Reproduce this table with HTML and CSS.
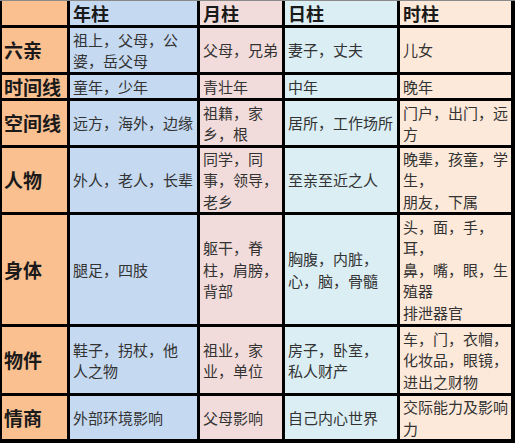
FILE: index.html
```html
<!DOCTYPE html>
<html lang="zh">
<head>
<meta charset="utf-8">
<link rel="stylesheet" href="styles.css">
</head>
<body>
<div class="table">
  <div class="cell c1 head"></div>
  <div class="cell c2 head">年柱</div>
  <div class="cell c3 head">月柱</div>
  <div class="cell c4 head">日柱</div>
  <div class="cell c5 head">时柱</div>

  <div class="cell c1 rh">六亲</div>
  <div class="cell c2">祖上，父母，公<br>婆，岳父母</div>
  <div class="cell c3">父母，兄弟</div>
  <div class="cell c4">妻子，丈夫</div>
  <div class="cell c5">儿女</div>

  <div class="cell c1 rh">时间线</div>
  <div class="cell c2">童年，少年</div>
  <div class="cell c3">青壮年</div>
  <div class="cell c4">中年</div>
  <div class="cell c5">晚年</div>

  <div class="cell c1 rh">空间线</div>
  <div class="cell c2">远方，海外，边缘</div>
  <div class="cell c3">祖籍，家<br>乡，根</div>
  <div class="cell c4">居所，工作场所</div>
  <div class="cell c5">门户，出门，远<br>方</div>

  <div class="cell c1 rh">人物</div>
  <div class="cell c2">外人，老人，长辈</div>
  <div class="cell c3">同学，同<br>事，领导，<br>老乡</div>
  <div class="cell c4">至亲至近之人</div>
  <div class="cell c5">晚辈，孩童，学<br>生，<br>朋友，下属</div>

  <div class="cell c1 rh">身体</div>
  <div class="cell c2">腿足，四肢</div>
  <div class="cell c3">躯干，脊<br>柱，肩膀，<br>背部</div>
  <div class="cell c4">胸腹，内脏，<br>心，脑，骨髓</div>
  <div class="cell c5">头，面，手，<br>耳，<br>鼻，嘴，眼，生<br>殖器<br>排泄器官</div>

  <div class="cell c1 rh">物件</div>
  <div class="cell c2">鞋子，拐杖，他<br>人之物</div>
  <div class="cell c3">祖业，家<br>业，单位</div>
  <div class="cell c4">房子，卧室，<br>私人财产</div>
  <div class="cell c5">车，门，衣帽，<br>化妆品，眼镜，<br>进出之财物</div>

  <div class="cell c1 rh">情商</div>
  <div class="cell c2">外部环境影响</div>
  <div class="cell c3">父母影响</div>
  <div class="cell c4">自己内心世界</div>
  <div class="cell c5">交际能力及影响<br>力</div>
</div>
</body>
</html>
```

FILE: styles.css
```css
html, body {
  margin: 0;
  padding: 0;
  background: #ffffff;
}

.table {
  width: 515px;
  height: 443px;
  box-sizing: border-box;
  display: grid;
  grid-template-columns: 65px 127px 82px 112px 111px;
  grid-template-rows: 24px 44px 23px 44px 64px 109px 66px 43px;
  gap: 3px;
  background: #000000;
  border-top: 1px solid #8a8a8a;
  padding: 0 4px 4px 2px;
  font-family: "Noto Sans CJK SC", "Noto Sans", sans-serif;
  font-size: 15px;
  line-height: 21.5px;
  color: #333333;
}

.cell {
  display: flex;
  flex-direction: column;
  justify-content: center;
  padding: 0 1px 0 3px;
  white-space: nowrap;
  min-width: 0;
}

.c1 { background: #fac090; }
.c2 { background: #c5d9f1; }
.c3 { background: #f2dcdb; }
.c4 { background: #daeef3; }
.c5 { background: #fde9d9; }

.head {
  font-size: 18px;
  font-weight: 700;
  color: #1a1a1a;
  line-height: 22px;
}

.rh {
  font-size: 19px;
  font-weight: 700;
  color: #1a1a1a;
  line-height: 22px;
  padding-left: 2px;
}
```
